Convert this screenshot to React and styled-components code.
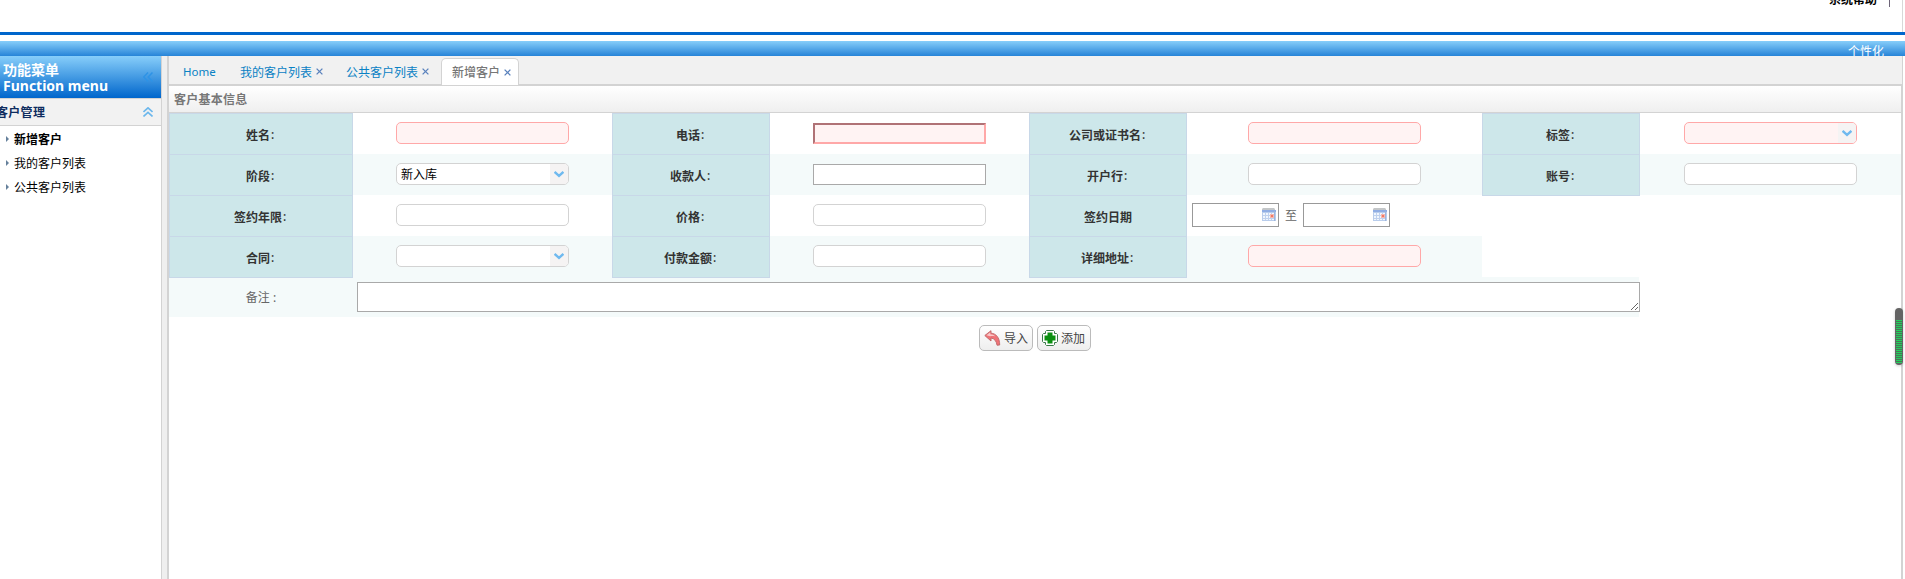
import React from "react";
import styled, { createGlobalStyle, css } from "styled-components";

const GlobalStyle = createGlobalStyle`
  * { box-sizing: border-box; }
  html, body { margin: 0; padding: 0; background: #fff; overflow: hidden; }
  body, input, textarea, button {
    font-family: "Noto Sans", "Noto Sans CJK SC", sans-serif;
    font-size: 12px;
  }
  svg { display: block; flex: none; }
`;

const Page = styled.div`
  position: relative;
  width: 1905px;
  height: 579px;
  display: flex;
  flex-direction: column;
  overflow: hidden;
  background: #fff;
`;

const Banner = styled.header`
  height: 32px;
  width: 1903px;
  border-right: 1px solid #d8d8d8;
  display: flex;
  justify-content: flex-end;
  overflow: hidden;
`;

const HelpLink = styled.span`
  height: 16px;
  margin-top: -8px;
  margin-right: 12px;
  line-height: 16px;
  font-weight: 700;
  color: #000;
`;

const Divider = styled.span`
  width: 1px;
  height: 7px;
  margin-right: 12px;
  background: #6d6478;
`;

const BlueLine = styled.div`
  height: 3px;
  background: #0066cc;
  margin-bottom: 6px;
`;

const GradientBar = styled.div`
  height: 15px;
  padding: 3px 21px 0 0;
  overflow: hidden;
  text-align: right;
  line-height: 16px;
  color: #fff;
  background: linear-gradient(#87cefa, #2784d8);
`;

const Body = styled.div`
  flex: 1;
  display: flex;
  min-height: 0;
`;

const Sidebar = styled.aside`
  width: 162px;
  flex: none;
  border-right: 1px solid #d3d3d3;
`;

const SidebarTitle = styled.div`
  height: 42px;
  padding: 6px 8px 0 3px;
  display: flex;
  justify-content: space-between;
  color: #fff;
  font-size: 14px;
  line-height: 16px;
  font-weight: 700;
  white-space: nowrap;
  background: linear-gradient(#87cefa, #0066cc);

  svg { margin-top: 10px; }
`;

const SectionTitle = styled.div`
  height: 28px;
  border-top: 1px solid #d3d3d3;
  border-bottom: 1px solid #d3d3d3;
  background: #f2f2f2;
  padding: 0 8px 0 0;
  display: flex;
  align-items: center;
  justify-content: space-between;
  color: #0e2d5f;
  font-weight: 700;

  span { margin-left: -4px; letter-spacing: 0.3px; }
`;

const MenuItem = styled.div`
  height: 24px;
  padding: 1px 0 0 6px;
  display: flex;
  align-items: center;
  gap: 5px;
  color: #000;
  font-weight: ${(p) => (p.$active ? 700 : 400)};
`;

const Splitter = styled.div`
  width: 5px;
  flex: none;
  background: #efefef;
`;

const Main = styled.main`
  width: 1736px;
  flex: none;
  border-left: 2px solid #d3d3d3;
  border-right: 2px solid #d3d3d3;
`;

const Tabs = styled.nav`
  height: 30px;
  margin-right: -1px;
  padding: 2px 0 0 3px;
  display: flex;
  gap: 4px;
  background: #f1f1f1;
  border-bottom: 2px solid #d3d3d3;
`;

const Tab = styled.div`
  width: ${(p) => p.$width}px;
  height: ${(p) => (p.$active ? 27 : 26)}px;
  padding: 0 7px 0 10px;
  display: flex;
  align-items: center;
  justify-content: space-between;
  border: 1px solid transparent;
  border-bottom: 0;
  color: #0a81c4;
  ${(p) => p.$latin && "font-size: 11.5px;"}
  ${(p) =>
    p.$active &&
    css`
      color: #777;
      font-weight: 500;
      border-color: #d3d3d3;
      border-radius: 5px 5px 0 0;
      background: #fff;
    `}
`;

const PanelTitle = styled.div`
  height: 27px;
  padding-left: 5px;
  border-bottom: 1px solid #d3d3d3;
  background: linear-gradient(#fff, #efefef);
  color: #777;
  font-weight: 700;
  letter-spacing: 0.25px;
  line-height: 27px;
`;

const FormRow = styled.div`
  height: 41px;
  width: ${(p) => p.$width || 1732}px;
  display: grid;
  grid-template-columns: 184px 259px 158px 259px 158px 295px 158px 261px;
  background: ${(p) => (p.$tinted ? "#f4fafa" : "#fff")};
`;

const LabelCell = styled.div`
  height: 42px;
  padding-top: 1px;
  display: flex;
  align-items: center;
  justify-content: center;
  border: 1px solid #c8d8e8;
  background: #cde7ea;
  color: #333;
  font-weight: 700;
`;

const Colon = styled.span`
  width: 6px;
  padding-left: 1px;
  font-weight: 500;
`;

const Field = styled.div`
  padding-top: ${(p) => (p.$plain ? 10 : 9)}px;
  display: flex;
  align-items: flex-start;
  justify-content: center;
`;

const Box = styled.div`
  width: 173px;
  height: 22px;
  display: flex;
  align-items: center;
  justify-content: space-between;
  padding-left: 4px;
  overflow: hidden;
  color: #000;
  border: 1px solid ${(p) => (p.$required ? "#ffa8a8" : "#d3d3d3")};
  border-radius: 5px;
  background: ${(p) => (p.$required ? "#fff3f3" : "#fff")};
`;

const PlainBox = styled.div`
  width: 173px;
  height: 21px;
  border: 1px solid #a9a9a9;
  background: #fff;
  ${(p) =>
    p.$required &&
    css`
      border: 2px solid;
      border-color: #b07276 #ffa8a8 #ffa8a8 #b07276;
      background: #fff3f3;
    `}
`;

const Arrow = styled.div`
  width: 18px;
  height: 20px;
  display: flex;
  align-items: center;
  justify-content: center;
  background: #f5f3f3;
`;

const DateRange = styled.div`
  padding: 8px 0 0 5px;
  display: flex;
  color: #666;
  line-height: 25px;
`;

const DateBox = styled.div`
  width: 87px;
  height: 24px;
  padding: 4px 2px 0 0;
  display: flex;
  justify-content: flex-end;
  border: 1px solid #999;
  background: #fff;
`;

const RangeWord = styled.span`
  width: 24px;
  text-align: center;
`;

const RemarkRow = styled.div`
  width: 1470px;
  height: 40px;
  display: flex;
  background: #f4fafa;
`;

const RemarkLabel = styled.div`
  width: 188px;
  flex: none;
  padding: 0 4px 0 0;
  display: flex;
  align-items: center;
  justify-content: center;
  color: #666;
`;

const RemarkBox = styled.div`
  width: 1283px;
  flex: none;
  height: 30px;
  margin-top: 5px;
  padding: 0 1px 1px 0;
  display: flex;
  align-items: flex-end;
  justify-content: flex-end;
  border: 1px solid #a9a9a9;
  background: #fff;
`;

const Actions = styled.div`
  padding: 8px 0 0 810px;
  display: flex;
  gap: 4px;
`;

const ActionButton = styled.button`
  width: 54px;
  height: 26px;
  padding: 0 0 0 4px;
  display: flex;
  align-items: center;
  gap: 3px;
  border: 1px solid #bbb;
  border-radius: 5px;
  background: linear-gradient(#fff, #eee);
  color: #444;
  white-space: nowrap;
`;

const Gauge = styled.div`
  position: absolute;
  right: 2px;
  top: 308px;
  width: 8px;
  height: 57px;
  padding: 12px 1px 2px;
  border-radius: 4px;
  background: #646464;
  box-shadow: 0 1px 3px rgba(0, 0, 0, 0.2);
`;

const GaugeFill = styled.div`
  height: 100%;
  background: repeating-linear-gradient(#22d05c 0 1px, #4b7458 1px 2px);
`;

const CollapseIcon = () => (
  <svg width="10" height="10" viewBox="0 0 10 10" fill="none" stroke="#2e93e6" strokeWidth="1.5">
    <path d="M5 .5.7 5 5 9.5M9.5.5 5.2 5l4.3 4.500" />
  </svg>
);

const FoldIcon = () => (
  <svg width="10" height="10" viewBox="0 0 10 10" fill="none" stroke="#6cb7ec" strokeWidth="1.6">
    <path d="M.5 5 5 .8 9.5 5M.5 9.5 5 5.3l4.500 4.200" />
  </svg>
);

const BulletIcon = () => (
  <svg width="3" height="6" viewBox="0 0 3 6" fill="#65809b">
    <path d="M0 0 3 3 0 6z" />
  </svg>
);

const CloseIcon = () => (
  <svg width="7" height="7" viewBox="0 0 7 7" fill="none" stroke="#5a82bd" strokeWidth="1.3">
    <path d="M.6.6l5.8 5.8M6.4.6.6 6.4" />
  </svg>
);

const ChevronIcon = () => (
  <svg width="10" height="7" viewBox="0 0 10 7" fill="none" stroke="#6fb9ef" strokeWidth="2.4">
    <path d="M.6.900 5 4.900 9.400.900" />
  </svg>
);

const CalendarIcon = () => (
  <svg width="14" height="13" viewBox="0 0 14 13">
    <path d="M1 0h11l1 1v2H0V1z" fill="#c3c6c8" />
    <path d="M0 2h14v11H0z" fill="#b9cdec" />
    <path d="M0 2h14v2H0z" fill="#8fade4" />
    <path d="M1 5h11v7H1z" fill="#f0f6fd" />
    <path d="M1 7.5h11M1 10.5h11M3.5 5v7M6.5 5v7M9.5 5v7" stroke="#bfd1ee" />
    <path d="M8 6h4v4H8z" fill="#f7b8ae" />
    <path d="M9 7h2v2H9z" fill="#f07a66" />
    <path d="M12.5 3v10" stroke="#9db5dc" />
  </svg>
);

const GripIcon = () => (
  <svg width="7" height="7" viewBox="0 0 7 7" stroke="#555" strokeWidth="0.9">
    <path d="M0 7 7 0M4 7l3-3" />
  </svg>
);

const ImportIcon = () => (
  <svg width="17" height="16" viewBox="0 0 17 16">
    <path
      d="M.8 5.500 7 .7v2.500c5 .3 8.700 4.300 8.700 11.800l-2.700.2C12.500 11.300 10.500 8.500 7 8v3z"
      fill="#ef7377"
      stroke="#bd6668"
      strokeWidth=".9"
    />
    <path d="M2.500 5.300 6.300 2.200v2c2 0 3.800.8 5 2.300C9.500 5.600 8 6 6 6.200z" fill="#f8c9ca" />
  </svg>
);

const AddIcon = () => (
  <svg width="16" height="16" viewBox="0 0 16 16">
    <path
      d="M4.500.5h7l1 1v2h2l1 1v7l-1 1h-2v2l-1 1h-7l-1-1v-2h-2l-1-1v-7l1-1h2v-2z"
      fill="#fff"
      stroke="#397a48"
      strokeWidth="1"
    />
    <path d="M5.500 2.500h5v3h3v5h-3v3h-5v-3h-3v-5h3z" fill="#0a900f" />
  </svg>
);

const Label = ({ children, colon = true }) => (
  <LabelCell>
    {children}
    {colon && <Colon>:</Colon>}
  </LabelCell>
);

const TextField = ({ required }) => (
  <Field>
    <Box $required={required} />
  </Field>
);

const PlainField = ({ required }) => (
  <Field $plain>
    <PlainBox $required={required} />
  </Field>
);

const SelectField = ({ required, value }) => (
  <Field>
    <Box $required={required}>
      <span>{value}</span>
      <Arrow>
        <ChevronIcon />
      </Arrow>
    </Box>
  </Field>
);

const DateInput = () => (
  <DateBox>
    <CalendarIcon />
  </DateBox>
);

const tabs = [
  { name: "Home", width: 53, fixed: true },
  { name: "我的客户列表", width: 102 },
  { name: "公共客户列表", width: 102 },
  { name: "新增客户", width: 78, active: true },
];

export default function App() {
  return (
    <>
      <GlobalStyle />
      <Page>
        <Banner>
          <HelpLink>系统帮助</HelpLink>
          <Divider />
        </Banner>
        <BlueLine />
        <GradientBar>个性化</GradientBar>
        <Body>
          <Sidebar>
            <SidebarTitle>
              <div>
                功能菜单
                <br />
                Function menu
              </div>
              <CollapseIcon />
            </SidebarTitle>
            <SectionTitle>
              <span>客户管理</span>
              <FoldIcon />
            </SectionTitle>
            {["新增客户", "我的客户列表", "公共客户列表"].map((name, i) => (
              <MenuItem key={name} $active={i === 0}>
                <BulletIcon />
                {name}
              </MenuItem>
            ))}
          </Sidebar>
          <Splitter />
          <Main>
            <Tabs>
              {tabs.map((t) => (
                <Tab key={t.name} $width={t.width} $active={t.active} $latin={t.fixed}>
                  {t.name}
                  {!t.fixed && <CloseIcon />}
                </Tab>
              ))}
            </Tabs>
            <PanelTitle>客户基本信息</PanelTitle>
            <FormRow>
              <Label>姓名</Label>
              <TextField required />
              <Label>电话</Label>
              <PlainField required />
              <Label>公司或证书名</Label>
              <TextField required />
              <Label>标签</Label>
              <SelectField required />
            </FormRow>
            <FormRow $tinted>
              <Label>阶段</Label>
              <SelectField value="新入库" />
              <Label>收款人</Label>
              <PlainField />
              <Label>开户行</Label>
              <TextField />
              <Label>账号</Label>
              <TextField />
            </FormRow>
            <FormRow $width={1313}>
              <Label>签约年限</Label>
              <TextField />
              <Label>价格</Label>
              <TextField />
              <Label colon={false}>签约日期</Label>
              <DateRange>
                <DateInput />
                <RangeWord>至</RangeWord>
                <DateInput />
              </DateRange>
            </FormRow>
            <FormRow $tinted $width={1313}>
              <Label>合同</Label>
              <SelectField />
              <Label>付款金额</Label>
              <TextField />
              <Label>详细地址</Label>
              <TextField required />
            </FormRow>
            <RemarkRow>
              <RemarkLabel>备注 :</RemarkLabel>
              <RemarkBox>
                <GripIcon />
              </RemarkBox>
            </RemarkRow>
            <Actions>
              <ActionButton>
                <ImportIcon />
                导入
              </ActionButton>
              <ActionButton>
                <AddIcon />
                添加
              </ActionButton>
            </Actions>
          </Main>
        </Body>
        <Gauge>
          <GaugeFill />
        </Gauge>
      </Page>
    </>
  );
}
